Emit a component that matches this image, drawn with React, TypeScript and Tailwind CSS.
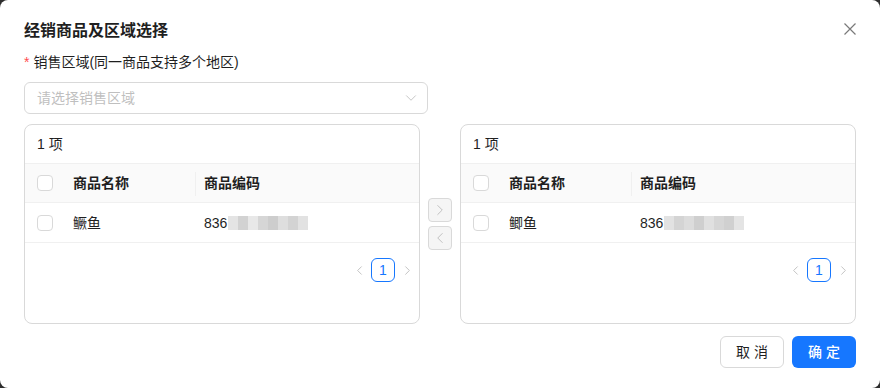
import { ChevronDown, ChevronLeft, ChevronRight } from 'lucide-react'

const font = { fontFamily: '"Liberation Sans", "Noto Sans CJK SC", sans-serif' }

function Checkbox() {
  return <span className="block w-4 h-4 rounded-[4px] border border-[#d9d9d9] bg-white" />
}

function Blur({ wide }: { wide?: boolean }) {
  const blocks = wide
    ? ['#e2e2e2', '#d4d4d4', '#dcdcdc', '#cfcfcf', '#e0e0e0', '#d6d6d6', '#d0d0d0', '#e4e4e4']
    : ['#e4e4e4', '#d2d2d2', '#e8e8e8', '#d6d6d6', '#cdcdcd', '#dedede', '#d3d3d3', '#e2e2e2']
  return (
    <span className="flex h-[14px] ml-[1px]">
      {blocks.map((c, i) => (
        <span key={i} className="block h-full w-[10px]" style={{ background: c }} />
      ))}
    </span>
  )
}

function Panel({ name, wide }: { name: string; wide?: boolean }) {
  return (
    <div className="w-[396px] h-[200px] rounded-lg border border-[#d9d9d9] flex flex-col">
      <div className="h-[39px] flex items-center px-3 text-[14px] text-[#1f1f1f] border-b border-[#f0f0f0]">
        1 项
      </div>
      <div className="flex h-[39px] items-center bg-[#fafafa] border-b border-[#f0f0f0] text-[14px] font-semibold text-[#1f1f1f]">
        <div className="w-[40px] pl-3 shrink-0">
          <Checkbox />
        </div>
        <div className="w-[131px] px-2 relative h-full flex items-center">
          商品名称
          <span className="absolute right-0 top-[8px] h-[24px] w-px bg-[#f0f0f0]" />
        </div>
        <div className="px-2">商品编码</div>
      </div>
      <div className="flex h-[40px] items-center border-b border-[#f0f0f0] text-[14px] text-[#1f1f1f]">
        <div className="w-[40px] pl-3 shrink-0">
          <Checkbox />
        </div>
        <div className="w-[131px] px-2">{name}</div>
        <div className="px-2 flex items-center">
          <span>836</span>
          <Blur wide={wide} />
        </div>
      </div>
      <div className="flex justify-end pt-[15px]">
        <span className="w-6 h-6 flex items-center justify-center text-[#bfbfbf]">
          <ChevronLeft size={15} strokeWidth={1.5} />
        </span>
        <span className="w-6 h-6 flex items-center justify-center rounded-md border border-[#1677ff] text-[#1677ff] text-[14px] font-medium">
          1
        </span>
        <span className="w-6 h-6 flex items-center justify-center text-[#bfbfbf]">
          <ChevronRight size={15} strokeWidth={1.5} />
        </span>
      </div>
    </div>
  )
}

export default function App() {
  return (
    <div className="w-[880px] h-[388px] bg-[#2e2e2e]" style={font}>
      <div className="w-full h-full bg-white rounded-lg px-6 pt-5 flex flex-col leading-[22px]">
        {/* Title */}
        <div className="flex items-center justify-between">
          <h2 className="text-[16px] font-semibold text-[#1f1f1f] leading-[22px]">经销商品及区域选择</h2>
          <svg width="12" height="12" viewBox="0 0 12 12" className="mt-[-4px]">
            <path d="M0.5 0.5 11.5 11.5M11.5 0.5 0.5 11.5" stroke="#7a7a7a" strokeWidth="1.2" fill="none" />
          </svg>
        </div>

        {/* Label */}
        <div className="mt-[9px] flex items-center text-[14px] text-[#1f1f1f]">
          <span className="text-[#ff4d4f] mr-1 text-[14px]">*</span>
          销售区域(同一商品支持多个地区)
        </div>

        {/* Select */}
        <div className="mt-[9px] w-[404px] h-8 rounded-md border border-[#d9d9d9] flex items-center justify-between pl-3 pr-[7px]">
          <span className="text-[14px] text-[#bfbfbf]">请选择销售区域</span>
          <ChevronDown size={18} strokeWidth={1.2} className="text-[#bfbfbf]" />
        </div>

        {/* Transfer */}
        <div className="mt-[10px] flex items-center gap-2">
          <Panel name="鳜鱼" />
          <div className="flex flex-col gap-1">
            <span className="w-6 h-6 rounded border border-[#d9d9d9] bg-[#f5f5f5] flex items-center justify-center text-[#bfbfbf]">
              <ChevronRight size={18} strokeWidth={1.3} />
            </span>
            <span className="w-6 h-6 rounded border border-[#d9d9d9] bg-[#f5f5f5] flex items-center justify-center text-[#bfbfbf]">
              <ChevronLeft size={18} strokeWidth={1.3} />
            </span>
          </div>
          <Panel name="鲫鱼" wide />
        </div>

        {/* Footer */}
        <div className="mt-3 flex justify-end gap-2">
          <button className="w-16 h-8 rounded-md border border-[#d9d9d9] bg-white text-[14px] text-[#1f1f1f]">
            取 消
          </button>
          <button className="w-16 h-8 rounded-md bg-[#1677ff] text-white text-[14px] font-medium">
            确 定
          </button>
        </div>
      </div>
    </div>
  )
}
